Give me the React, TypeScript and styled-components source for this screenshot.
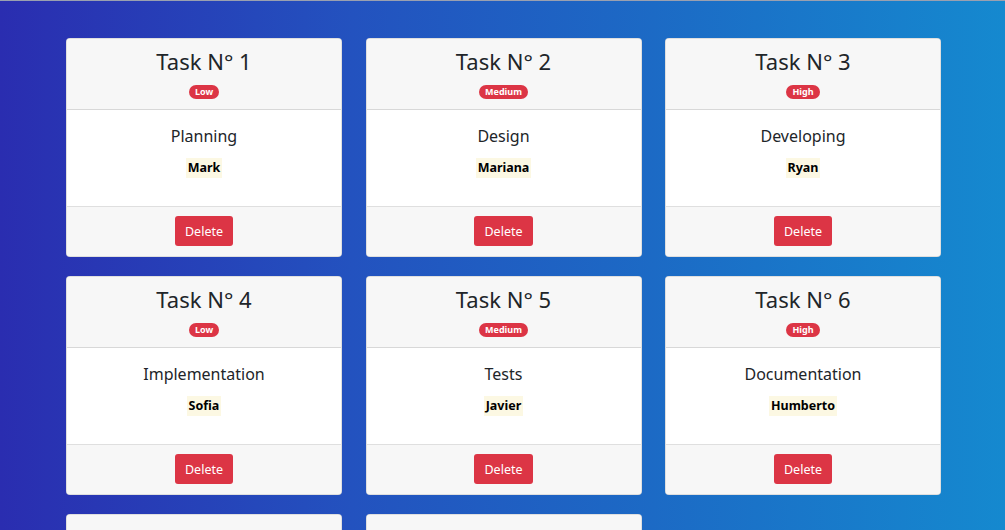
import React from 'react';
import styled, { createGlobalStyle } from 'styled-components';

interface ITask {
  id: number;
  title: string;
  priority: 'Low' | 'Medium' | 'High';
  responsible: string;
}

const tasks: ITask[] = [
  { id: 1, title: 'Planning', priority: 'Low', responsible: 'Mark' },
  { id: 2, title: 'Design', priority: 'Medium', responsible: 'Mariana' },
  { id: 3, title: 'Developing', priority: 'High', responsible: 'Ryan' },
  { id: 4, title: 'Implementation', priority: 'Low', responsible: 'Sofia' },
  { id: 5, title: 'Tests', priority: 'Medium', responsible: 'Javier' },
  { id: 6, title: 'Documentation', priority: 'High', responsible: 'Humberto' },
];

// cards below the fold, only their top edge shows
const hiddenCards = [7, 8];

export default function App() {
  return (
    <Root>
      <GlobalStyle />
      <Grid>
        {tasks.map((task) => (
          <Card key={task.id}>
            <Header>
              <Title>Task N° {task.id}</Title>
              <Badge>{task.priority}</Badge>
            </Header>
            <Body>
              <Subtitle>{task.title}</Subtitle>
              <Mark>{task.responsible}</Mark>
            </Body>
            <Footer>
              <Button>Delete</Button>
            </Footer>
          </Card>
        ))}
        {hiddenCards.map((id) => (
          <Card key={id}>
            <Header />
          </Card>
        ))}
      </Grid>
    </Root>
  );
}

const GlobalStyle = createGlobalStyle`
  html, body {
    margin: 0;
    padding: 0;
    height: 530px;
    overflow: hidden;
  }
  body {
    font-family: "Noto Sans", "Open Sans", sans-serif;
    color: #212529;
  }
`;

const Root = styled.div`
  height: 530px;
  box-sizing: border-box;
  border-top: 1px solid #9aa0b0;
  background: linear-gradient(90deg, #2a2db0 0%, #2352bf 35%, #1c6ac5 65%, #1589cf 100%);
  padding: 37px 0 0 66px;
  overflow: hidden;
`;

const Grid = styled.div`
  display: grid;
  grid-template-columns: repeat(3, 276px);
  column-gap: 23.5px;
  row-gap: 19px;
`;

const Card = styled.div`
  display: flex;
  flex-direction: column;
  height: 219px;
  box-sizing: border-box;
  background: #fff;
  border: 1px solid rgba(0, 0, 0, 0.125);
  border-radius: 4px;
  overflow: hidden;
`;

const Header = styled.div`
  height: 71px;
  box-sizing: border-box;
  background: #f7f7f7;
  border-bottom: 1px solid rgba(0, 0, 0, 0.125);
  display: flex;
  flex-direction: column;
  align-items: center;
  padding-top: 7px;
`;

const Title = styled.h3`
  margin: 0;
  font-size: 22px;
  font-weight: 400;
  line-height: 30px;
`;

const Badge = styled.span`
  margin-top: 9px;
  background: #dc3545;
  color: #fff;
  font-size: 9px;
  font-weight: 700;
  line-height: 14px;
  height: 14px;
  padding: 0 6px;
  border-radius: 10px;
`;

const Body = styled.div`
  flex: 1;
  display: flex;
  flex-direction: column;
  align-items: center;
  padding-top: 15px;
  border-bottom: 1px solid rgba(0, 0, 0, 0.125);
`;

const Subtitle = styled.h5`
  margin: 0;
  font-size: 16px;
  font-weight: 400;
  line-height: 22px;
`;

const Mark = styled.mark`
  margin-top: 11px;
  background: #fcf8e3;
  color: #000;
  font-size: 12.5px;
  font-weight: 700;
  line-height: 20px;
  padding: 0 2px;
`;

const Footer = styled.div`
  height: 49px;
  box-sizing: border-box;
  background: #f7f7f7;
  display: flex;
  justify-content: center;
  align-items: flex-start;
  padding-top: 9px;
`;

const Button = styled.button`
  background: #dc3545;
  color: #fff;
  border: none;
  border-radius: 3px;
  height: 30px;
  padding: 0 10px;
  font-family: inherit;
  font-size: 12.5px;
  cursor: pointer;
`;
